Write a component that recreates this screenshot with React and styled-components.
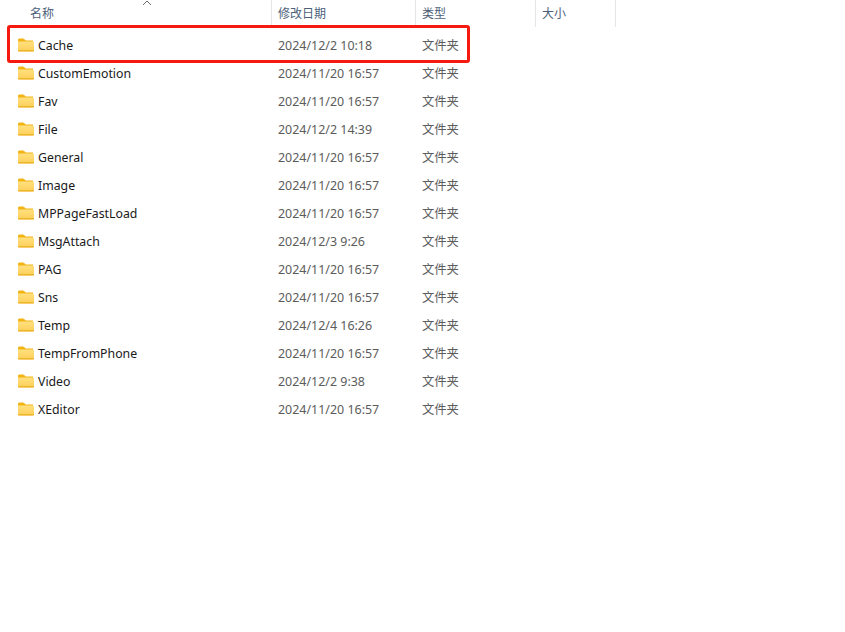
import styled, { createGlobalStyle } from "styled-components";

const GlobalStyle = createGlobalStyle`
  html, body {
    margin: 0;
    background: #fff;
  }
  body {
    font-family: "Noto Sans", "Noto Sans CJK SC", sans-serif;
    font-size: 12px;
  }
`;

const columns = "272px 144px 120px 80px";

const Page = styled.div`
  width: 845px;
  height: 632px;
  overflow: hidden;
  background: #fff;
`;
const Header = styled.div`
  position: relative;
  display: grid;
  grid-template-columns: ${columns};
  width: max-content;
  height: 27px;
`;
const SortArrow = styled.svg`
  position: absolute;
  left: 142px;
  top: 0;
  width: 10px;
  height: 5px;
`;
const HeaderCell = styled.div`
  display: flex;
  align-items: center;
  padding-left: ${(p) => p.$pad}px;
  border-right: 1px solid #e5e5e5;
  color: #4c607a;
  font-size: 12px;
  line-height: 27px;
`;
const List = styled.div`
  position: relative;
  padding-top: 4px;
`;
const Row = styled.div`
  display: grid;
  grid-template-columns: ${columns};
  width: max-content;
  height: 28px;
  align-items: center;
`;
const NameCell = styled.div`
  display: flex;
  align-items: center;
  gap: 4px;
  padding-left: 18px;
  color: #1a1a1a;
  font-size: 12.3px;
`;
const DateCell = styled.div`
  padding-left: 6px;
  color: #5c5c5c;
  font-size: 12.45px;
`;
const TypeCell = styled.div`
  padding-left: 6px;
  color: #5c5c5c;
  font-size: 12.3px;
`;
const Highlight = styled.div`
  position: absolute;
  left: 7px;
  top: -2px;
  width: 463px;
  height: 38px;
  box-sizing: border-box;
  border: 3px solid #f5190f;
  border-radius: 3px;
`;

const FolderIcon = () => (
  <svg width="16" height="14" viewBox="0 0 16 14">
    <defs>
      <linearGradient id="folderBody" x1="0" y1="0" x2="0" y2="1">
        <stop offset="0" stopColor="#ffe07f" />
        <stop offset="1" stopColor="#fccf57" />
      </linearGradient>
    </defs>
    <path d="M0 2C0 1 .7.5 1.6.5h3.2c.6 0 1 .2 1.4.6L7.6 2.4H15V5H0z" fill="#f2b315" />
    <path d="M0 3.6h14.6c.8 0 1.4.6 1.4 1.4v7.2c0 .8-.6 1.3-1.4 1.3H1.4C.6 13.5 0 13 0 12.2z" fill="url(#folderBody)" />
    <path d="M0 12.4c0 .7.6 1.1 1.4 1.1h13.2c.8 0 1.4-.4 1.4-1.1v-.3H0z" fill="#efb52f" />
  </svg>
);

const headers = [
  { label: "名称", pad: 30 },
  { label: "修改日期", pad: 6 },
  { label: "类型", pad: 6 },
  { label: "大小", pad: 6 },
];

const folders = [
  ["Cache", "2024/12/2 10:18"],
  ["CustomEmotion", "2024/11/20 16:57"],
  ["Fav", "2024/11/20 16:57"],
  ["File", "2024/12/2 14:39"],
  ["General", "2024/11/20 16:57"],
  ["Image", "2024/11/20 16:57"],
  ["MPPageFastLoad", "2024/11/20 16:57"],
  ["MsgAttach", "2024/12/3 9:26"],
  ["PAG", "2024/11/20 16:57"],
  ["Sns", "2024/11/20 16:57"],
  ["Temp", "2024/12/4 16:26"],
  ["TempFromPhone", "2024/11/20 16:57"],
  ["Video", "2024/12/2 9:38"],
  ["XEditor", "2024/11/20 16:57"],
];

export default function App() {
  return (
    <Page>
      <GlobalStyle />
      <Header>
        <SortArrow viewBox="0 0 10 5">
          <path d="M1 5l4-4 4 4" fill="none" stroke="#6d6d6d" strokeWidth="1" />
        </SortArrow>
        {headers.map((h) => (
          <HeaderCell key={h.label} $pad={h.pad}>
            {h.label}
          </HeaderCell>
        ))}
      </Header>
      <List>
        {folders.map(([name, date]) => (
          <Row key={name}>
            <NameCell>
              <FolderIcon />
              {name}
            </NameCell>
            <DateCell>{date}</DateCell>
            <TypeCell>文件夹</TypeCell>
          </Row>
        ))}
        <Highlight />
      </List>
    </Page>
  );
}
